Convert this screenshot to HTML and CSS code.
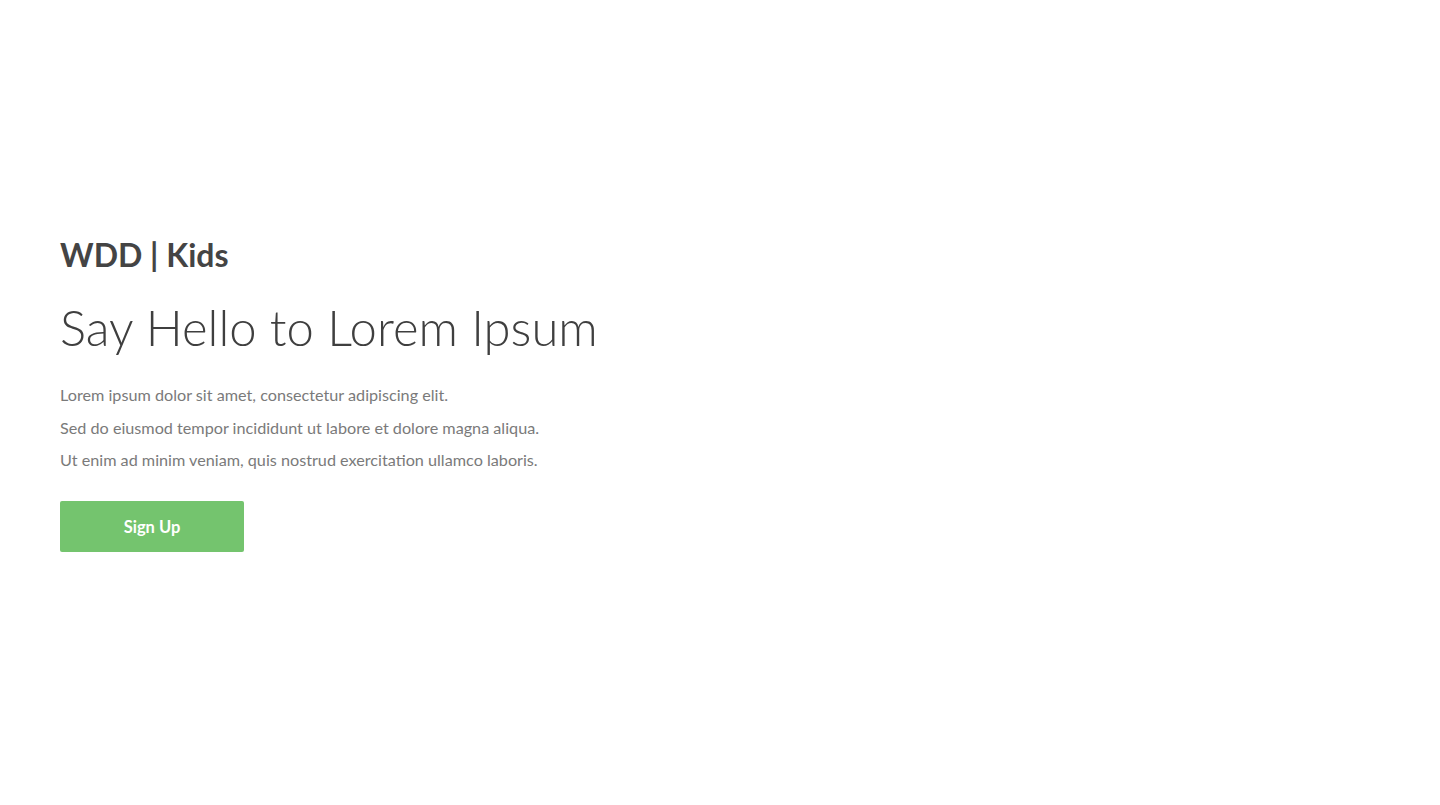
FILE: index.html
```html
<!DOCTYPE html>
<html>
<head>
<meta charset="utf-8">
<link rel="stylesheet" href="styles.css">
</head>
<body>
<main class="hero">
  <div class="content">
    <h1 class="brand">WDD | Kids</h1>
    <h2 class="headline">Say Hello to Lorem Ipsum</h2>
    <div class="copy">
      <p>Lorem ipsum dolor sit amet, consectetur adipiscing elit.</p>
      <p>Sed do eiusmod tempor incididunt ut labore et dolore magna aliqua.</p>
      <p>Ut enim ad minim veniam, quis nostrud exercitation ullamco laboris.</p>
    </div>
    <a class="btn" href="#">Sign Up</a>
  </div>
</main>
</body>
</html>
```
FILE: styles.css
```css
html, body {
  margin: 0;
  padding: 0;
  background: #fff;
  font-family: Lato, "Open Sans", sans-serif;
}
.hero {
  height: 805px;
  display: flex;
  align-items: flex-start;
  padding: 0 60px;
  box-sizing: border-box;
}
.content {
  padding-top: 234px;
  display: flex;
  flex-direction: column;
  align-items: flex-start;
}
.brand {
  margin: 0;
  font-size: 32px;
  font-weight: 700;
  color: #444;
  line-height: 42px;
}
.headline {
  margin: 21px 0 0;
  font-size: 49px;
  font-weight: 300;
  color: #3f3f3f;
  line-height: 60px;
}
.copy {
  margin-top: 22px;
}
.copy p {
  margin: 0;
  font-size: 16.2px;
  line-height: 32.5px;
  color: #7a7a7a;
}
.btn {
  margin-top: 24px;
  width: 184px;
  height: 51px;
  padding-top: 2px;
  box-sizing: border-box;
  background: #74c46e;
  color: #fff;
  border-radius: 2px;
  display: flex;
  align-items: center;
  justify-content: center;
  font-size: 16.5px;
  font-weight: 700;
  text-decoration: none;
}
```
